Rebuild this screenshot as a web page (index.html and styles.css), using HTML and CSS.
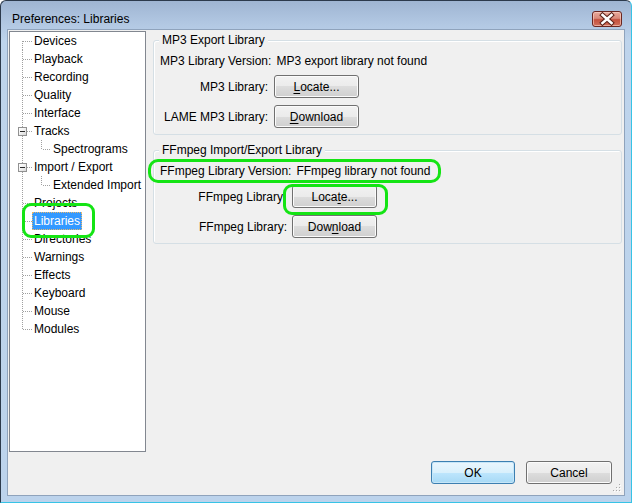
FILE: index.html
```html
<!DOCTYPE html>
<html lang="en">
<head>
<meta charset="utf-8">
<title>Preferences: Libraries</title>
<link rel="stylesheet" href="styles.css">
</head>
<body>
<div class="window">
  <div class="titlebar">
    <span class="title">Preferences: Libraries</span>
    <button class="close" aria-label="Close">
      <svg width="28" height="14" viewBox="0 0 28 14">
        <path d="M9.5 3 L18.5 11 M18.5 3 L9.5 11" stroke="#5a2018" stroke-width="4.6" stroke-linecap="square"/>
        <path d="M9.5 3 L18.5 11 M18.5 3 L9.5 11" stroke="#ffffff" stroke-width="2.6" stroke-linecap="square"/>
      </svg>
    </button>
  </div>
  <div class="client">
    <div class="main">
      <ul class="tree">
        <li class="row first"><span class="lbl">Devices</span></li>
        <li class="row"><span class="lbl">Playback</span></li>
        <li class="row"><span class="lbl">Recording</span></li>
        <li class="row"><span class="lbl">Quality</span></li>
        <li class="row"><span class="lbl">Interface</span></li>
        <li class="row exp-row"><span class="exp"></span><span class="lbl">Tracks</span></li>
        <li class="row child"><span class="lbl">Spectrograms</span></li>
        <li class="row exp-row"><span class="exp"></span><span class="lbl">Import / Export</span></li>
        <li class="row child"><span class="lbl">Extended Import</span></li>
        <li class="row"><span class="lbl">Projects</span></li>
        <li class="row sel"><span class="lbl">Libraries</span></li>
        <li class="row"><span class="lbl">Directories</span></li>
        <li class="row"><span class="lbl">Warnings</span></li>
        <li class="row"><span class="lbl">Effects</span></li>
        <li class="row"><span class="lbl">Keyboard</span></li>
        <li class="row"><span class="lbl">Mouse</span></li>
        <li class="row last"><span class="lbl">Modules</span></li>
      </ul>
      <div class="pages">
        <div class="group g-mp3">
          <div class="legend">MP3 Export Library</div>
          <div class="version"><span>MP3 Library Version:</span><span>MP3 export library not found</span></div>
          <div class="grid grid-mp3">
            <span class="flabel">MP3 Library:</span><button class="btn"><u>L</u>ocate...</button>
            <span class="flabel">LAME MP3 Library:</span><button class="btn"><u>D</u>ownload</button>
          </div>
        </div>
        <div class="group g-ff">
          <div class="legend">FFmpeg Import/Export Library</div>
          <div class="version"><span>FFmpeg Library Version:</span><span>FFmpeg library not found</span></div>
          <div class="grid grid-ff">
            <span class="flabel clipped">FFmpeg Library</span><button class="btn">Loca<u>t</u>e...</button>
            <span class="flabel">FFmpeg Library:</span><button class="btn">Dow<u>n</u>load</button>
          </div>
        </div>
      </div>
    </div>
    <div class="actions">
      <button class="btn default ok">OK</button>
      <button class="btn cancel">Cancel</button>
    </div>
    <span class="grip">
      <svg width="8" height="8" viewBox="0 0 8 8">
        <g fill="#ffffff"><rect x="7" y="1" width="1" height="1"/><rect x="7" y="4" width="1" height="1"/><rect x="4" y="4" width="1" height="1"/><rect x="7" y="7" width="1" height="1"/><rect x="4" y="7" width="1" height="1"/><rect x="1" y="7" width="1" height="1"/></g>
        <g fill="#a8a8a8"><rect x="6" y="0" width="1" height="1"/><rect x="6" y="3" width="1" height="1"/><rect x="3" y="3" width="1" height="1"/><rect x="6" y="6" width="1" height="1"/><rect x="3" y="6" width="1" height="1"/><rect x="0" y="6" width="1" height="1"/></g>
      </svg>
    </span>
  </div>
  <div class="mark mark-lib"></div>
  <div class="mark mark-ver"></div>
  <div class="mark mark-loc"></div>
</div>
</body>
</html>
```

FILE: styles.css
```css
* { box-sizing: border-box; }

html, body {
  margin: 0;
  padding: 0;
  background: #ffffff;
}

body {
  font-family: "Liberation Sans", Arial, sans-serif;
  font-size: 12px;
  color: #000;
}

.window {
  position: relative;
  width: 632px;
  height: 503px;
  border: 1px solid;
  border-color: #2c3a4c #37c3e6 #37c3e6 #2c3a4c;
  border-radius: 6px 6px 0 0;
  background: linear-gradient(to bottom, #9fb5d2 0px, #b1c7e2 22px, #bed4ec 40px, #bcd3ec 100%);
  padding: 0 7px 7px 7px;
  display: flex;
  flex-direction: column;
}

.titlebar {
  height: 29px;
  display: flex;
  justify-content: space-between;
  align-items: flex-start;
}

.title {
  margin-left: 4px;
  margin-top: 10px;
  line-height: 16px;
  font-size: 12px;
  color: #000;
}

.close {
  margin-top: 10px;
  margin-right: 2px;
  width: 30px;
  height: 16px;
  padding: 0;
  border: 1px solid #6a2620;
  border-radius: 3px;
  background: linear-gradient(to bottom, #e9a99b 0%, #d98a7a 45%, #c4503d 55%, #d0705c 100%);
  box-shadow: inset 0 0 0 1px rgba(255, 220, 210, 0.55);
  display: flex;
  align-items: center;
  justify-content: center;
}

.close svg { display: block; }

.client {
  position: relative;
  flex: 1;
  background: #f0f0f0;
  box-shadow: 0 0 0 1px #8fa3bc;
  padding: 1px 0 0 1px;
  display: flex;
  flex-direction: column;
}

.main {
  height: 421px;
  display: flex;
  gap: 7px;
}

/* ---------- tree ---------- */
.tree {
  list-style: none;
  margin: 0;
  padding: 0;
  width: 137px;
  height: 421px;
  border: 1px solid #828790;
  background: #ffffff;
}

.row {
  height: 18px;
  display: flex;
  align-items: center;
  padding-left: 22px;
  white-space: nowrap;
  background:
    repeating-linear-gradient(to right, #a0a0a0 0 1px, transparent 1px 2px) 13px 9px / 9px 1px no-repeat,
    repeating-linear-gradient(to bottom, #a0a0a0 0 1px, transparent 1px 2px) 12px 0 / 1px 18px no-repeat;
}

.row.first {
  background:
    repeating-linear-gradient(to right, #a0a0a0 0 1px, transparent 1px 2px) 13px 9px / 9px 1px no-repeat,
    repeating-linear-gradient(to bottom, #a0a0a0 0 1px, transparent 1px 2px) 12px 9px / 1px 9px no-repeat;
}

.row.last {
  background:
    repeating-linear-gradient(to right, #a0a0a0 0 1px, transparent 1px 2px) 13px 9px / 9px 1px no-repeat,
    repeating-linear-gradient(to bottom, #a0a0a0 0 1px, transparent 1px 2px) 12px 0 / 1px 10px no-repeat;
}

.row.exp-row {
  padding-left: 8px;
  background:
    repeating-linear-gradient(to right, #a0a0a0 0 1px, transparent 1px 2px) 17px 9px / 5px 1px no-repeat,
    repeating-linear-gradient(to bottom, #a0a0a0 0 1px, transparent 1px 2px) 12px 0 / 1px 18px no-repeat;
}

.row.child {
  padding-left: 41px;
  background:
    repeating-linear-gradient(to right, #a0a0a0 0 1px, transparent 1px 2px) 33px 9px / 8px 1px no-repeat,
    repeating-linear-gradient(to bottom, #a0a0a0 0 1px, transparent 1px 2px) 31px 0 / 1px 10px no-repeat,
    repeating-linear-gradient(to bottom, #a0a0a0 0 1px, transparent 1px 2px) 12px 0 / 1px 18px no-repeat;
}

.exp {
  align-self: flex-start;
  margin-top: 5px;
  width: 9px;
  height: 9px;
  border: 1px solid #919191;
  background:
    linear-gradient(#2a2a2a, #2a2a2a) center / 5px 1px no-repeat,
    linear-gradient(135deg, #ffffff 0%, #f4f4f4 40%, #d8d8d8 100%);
  margin-right: 5px;
}

.lbl {
  line-height: 16px;
  border: 1px solid transparent;
  padding: 0 1px;
}

.row.sel .lbl {
  background: #3399ff;
  color: #ffffff;
  border: 1px dotted #e9b76a;
}

/* ---------- pages ---------- */
.pages {
  flex: 1;
  padding-right: 2px;
  display: flex;
  flex-direction: column;
}

.group {
  border: 1px solid #d5dfe5;
  border-radius: 3px;
  box-shadow: inset 1px 1px 0 #ffffff;
  padding-left: 6px;
}

.g-mp3 {
  margin-top: 9px;
  height: 95px;
}

.g-ff {
  margin-top: 15px;
  height: 94px;
}

.legend {
  display: table;
  margin: -9px 0 0 -1px;
  padding: 0 3px;
  line-height: 16px;
  background: #f0f0f0;
}

.version {
  margin-top: 5px;
  line-height: 16px;
  display: flex;
  gap: 5px;
  white-space: nowrap;
}

.grid {
  margin-top: 6px;
  display: grid;
  grid-template-rows: 23px 23px;
  row-gap: 7px;
  align-items: center;
}

.grid-mp3 {
  grid-template-columns: 108px 85px;
  column-gap: 6px;
}

.grid-ff {
  grid-template-columns: 127px 85px;
  column-gap: 5px;
}

.flabel {
  text-align: right;
  white-space: nowrap;
  line-height: 16px;
}

.flabel.clipped {
  padding-right: 4px;
}

.btn {
  font-family: "Liberation Sans", Arial, sans-serif;
  font-size: 12px;
  color: #000;
  width: 85px;
  height: 23px;
  padding: 0;
  border: 1px solid #707070;
  border-radius: 3px;
  background: linear-gradient(to bottom, #f2f2f2 0%, #ebebeb 50%, #dddddd 50%, #cfcfcf 100%);
  box-shadow: inset 0 0 0 1px #fbfbfb;
}

.btn u {
  text-decoration: underline;
  text-underline-offset: 2px;
}

.actions {
  margin-top: 9px;
  padding-right: 12px;
  display: flex;
  justify-content: flex-end;
  gap: 11px;
}

.btn.ok { width: 84px; }
.btn.cancel { width: 86px; }

.btn.default {
  border-color: #3c7fb1;
  background: linear-gradient(to bottom, #eaf6fd 0%, #d9f0fc 50%, #bee6fd 50%, #a7d9f5 100%);
  box-shadow: inset 0 0 0 1px #c6e6f8;
}

.grip {
  position: absolute;
  right: 3px;
  bottom: 3px;
  width: 8px;
  height: 8px;
}

.grip svg { display: block; }

/* ---------- annotation overlays ---------- */
.mark {
  position: absolute;
  border: 3px solid #14e414;
  pointer-events: none;
}

.mark-lib {
  left: 21px;
  top: 202px;
  width: 73px;
  height: 35px;
  border-radius: 9px;
}

.mark-ver {
  left: 147px;
  top: 158px;
  width: 293px;
  height: 24px;
  border-radius: 10px;
}

.mark-loc {
  left: 282px;
  top: 183px;
  width: 105px;
  height: 31px;
  border-radius: 9px;
}
```
